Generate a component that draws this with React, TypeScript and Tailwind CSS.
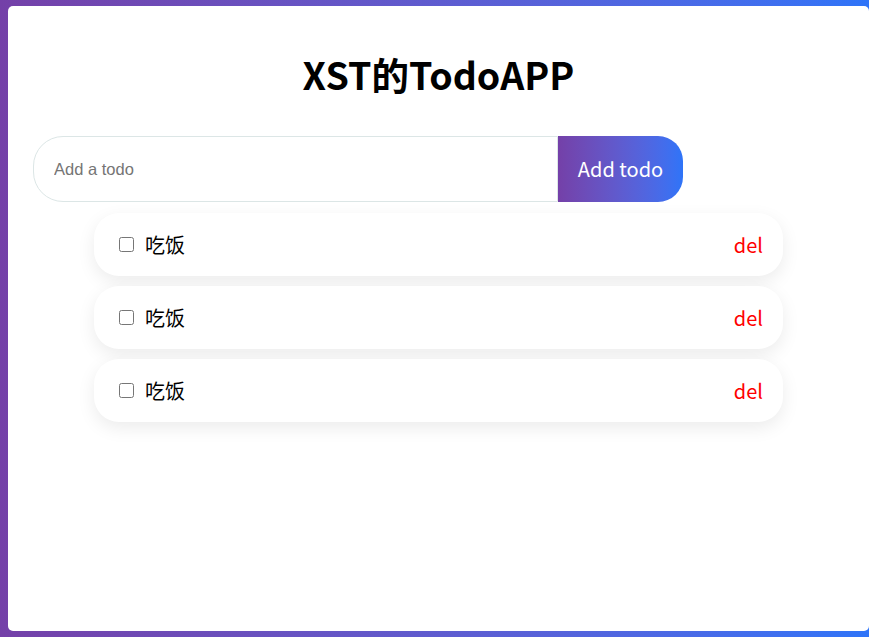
import { useState } from "react";

const cjk = { fontFamily: '"Noto Sans CJK SC", "Noto Sans", sans-serif' };

export default function App() {
  const [todos] = useState(["吃饭", "吃饭", "吃饭"]);

  return (
    <div className="h-[637px] w-[869px] overflow-hidden bg-gradient-to-r from-[#7440a8] to-[#2e74f8] pl-2 pt-[6px]">
      <div className="h-[625px] w-[861px] rounded-[5px] bg-white pt-[41px]" style={cjk}>
        <h1 className="text-center text-[37.5px] font-bold leading-[54px] text-black">XST的TodoAPP</h1>

        <div className="ml-[25px] mt-[35px] flex h-[66px] w-[650px]">
          <input
            placeholder="Add a todo"
            className="h-full w-[525px] rounded-l-[30px] border border-[#dce6e6] pl-5 text-[16.5px] outline-none placeholder:text-[#757575]"
            style={{ fontFamily: '"Liberation Sans", Arial, sans-serif' }}
          />
          <button className="h-full w-[125px] rounded-r-[25px] bg-gradient-to-r from-[#7440a8] to-[#2e74f8] text-[20px] text-white">
            Add todo
          </button>
        </div>

        <ul className="mx-auto mt-[11px] flex w-[689px] flex-col gap-[10px]">
          {todos.map((t, i) => (
            <li
              key={i}
              className="flex h-[63px] items-center justify-between rounded-[25px] bg-white pl-[25px] pr-5 shadow-[0_6px_18px_rgba(0,0,0,0.08)]"
            >
              <label className="flex items-center">
                <input type="checkbox" className="mr-[11px] h-[15px] w-[15px]" />
                <span className="text-[20px] text-black">{t}</span>
              </label>
              <span className="text-[20px] text-[#ff0000]">del</span>
            </li>
          ))}
        </ul>
      </div>
    </div>
  );
}
